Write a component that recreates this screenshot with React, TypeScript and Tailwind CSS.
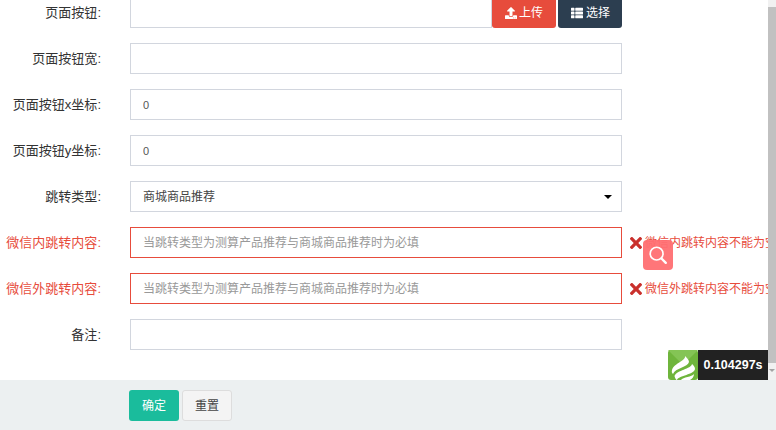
import { ReactNode } from 'react';
import { FaUpload, FaThList, FaTimes } from 'react-icons/fa';

const font = 'font-["Liberation_Sans","Noto_Sans_CJK_SC",sans-serif]';
const hint = '当跳转类型为测算产品推荐与商城商品推荐时为必填';

function Row({ label, error, children }: { label: string; error?: string; children: ReactNode }) {
  return (
    <div className="flex h-[31px] items-center shrink-0 whitespace-nowrap">
      <label className={`w-[101px] shrink-0 text-right text-[13px] ${error ? 'text-[#e74c3c]' : 'text-[#333]'}`}>
        {label}:
      </label>
      <div className="ml-[29px] w-[492px] h-full shrink-0">{children}</div>
      {error && (
        <span className="ml-2 flex items-center gap-[3px] text-xs text-[#e74c3c]">
          <FaTimes className="w-3 h-[18px] text-[#c9302c] shrink-0" />
          {error}
        </span>
      )}
    </div>
  );
}

function Field({ value, placeholder, invalid }: { value?: string; placeholder?: string; invalid?: boolean }) {
  return (
    <input
      readOnly
      value={value ?? ''}
      placeholder={placeholder}
      className={`w-full h-full border bg-white px-3 text-[11px] text-[#555] outline-none placeholder:text-xs placeholder:text-[#999] ${
        invalid ? 'border-[#e74c3c]' : 'border-[#d2d6de]'
      }`}
    />
  );
}

function Logo() {
  return (
    <svg viewBox="0 0 30 30" className="w-[30px] h-[30px]">
      <rect width="30" height="30" rx="3" fill="#6fb53c" />
      <path d="M0 0H30L15 15Z" fill="#84c455" />
      <path d="M17 6C18 11 6 13 4 20C3.5 22 4 23 5 24C7 18 20 17 21 12C21 10 19 8 17 6Z" fill="#fff" />
      <path d="M24 14C23 19 9 20 6.5 26C7 28 8 30 9 30C11 25 26 25 27 19C27 17 25.5 15 24 14Z" fill="#fff" />
      <path d="M26 24C24 27 15 27 13 30H22C24 29 26 27 26 24Z" fill="#fff" />
    </svg>
  );
}

export default function App() {
  return (
    <div className={`relative w-[776px] h-[430px] overflow-hidden bg-white flex flex-col ${font}`}>
      <div className="flex h-[380px] shrink-0">
        <div className="flex-1 min-w-0 overflow-hidden flex flex-col gap-[15px] -mt-[3px]">
          <Row label="页面按钮">
            <div className="flex h-full">
              <div className="w-[362px] border border-[#d2d6de] border-t-0" />
              <button className="w-[64px] rounded-b-[3px] bg-[#e74c3c] text-xs text-white flex items-center justify-center gap-[2px]">
                <FaUpload className="w-3 h-3" />
                上传
              </button>
              <button className="ml-[2px] w-[64px] pl-[1px] rounded-b-[3px] bg-[#2c3e50] text-xs text-white flex items-center justify-center gap-[3px]">
                <FaThList className="w-3 h-3" />
                选择
              </button>
            </div>
          </Row>
          <Row label="页面按钮宽"><Field /></Row>
          <Row label="页面按钮x坐标"><Field value="0" /></Row>
          <Row label="页面按钮y坐标"><Field value="0" /></Row>
          <Row label="跳转类型">
            <div className="relative h-full border border-[#d2d6de] bg-white px-3 flex items-center text-xs text-[#444]">
              商城商品推荐
              <span className="absolute right-[9px] top-[13px] border-x-4 border-t-4 border-x-transparent border-t-black" />
            </div>
          </Row>
          <Row label="微信内跳转内容" error="微信内跳转内容不能为空"><Field placeholder={hint} invalid /></Row>
          <Row label="微信外跳转内容" error="微信外跳转内容不能为空"><Field placeholder={hint} invalid /></Row>
          <Row label="备注"><Field /></Row>
        </div>
        <div className="w-2 shrink-0 bg-[#f1f1f1] pt-[7px] flex flex-col items-center">
          <div className="w-full h-[356px] bg-[#c1c1c1]" />
          <span className="mt-[6px] border-x-[3px] border-t-[3px] border-x-transparent border-t-[#a3a3a3]" />
        </div>
      </div>
      <div className="flex-1 bg-[#ecf0f1] pl-[129px] pt-[10px] flex items-start gap-[3px]">
        <button className="w-[50px] h-[31px] rounded-[3px] bg-[#1abc9c] text-xs text-white">确定</button>
        <button className="w-[50px] h-[31px] rounded-[3px] border border-[#dddddd] bg-[#f4f4f4] text-xs text-[#444]">重置</button>
      </div>

      <div className="absolute left-[643px] top-[240px] w-[30px] h-[30px] rounded-[4px] bg-[#ff6f72]/95 flex items-center justify-center">
        <svg viewBox="0 0 24 24" className="w-[22px] h-[22px]" fill="none" stroke="#fff" strokeWidth="1.8" strokeLinecap="round">
          <circle cx="10.5" cy="10.5" r="7" />
          <path d="M15.8 15.8L20.5 20.5" strokeWidth="2.6" />
        </svg>
      </div>

      <div className="absolute left-[668px] top-[350px] h-[30px] flex overflow-hidden">
        <Logo />
        <span className="w-[70px] bg-[#222] text-white text-[12.5px] font-bold flex items-center justify-center">0.104297s</span>
      </div>
    </div>
  );
}
